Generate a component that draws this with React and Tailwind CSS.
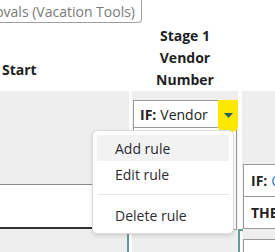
import { useState } from "react";

const font = "font-['Segoe_UI','Open_Sans',sans-serif]";

function MenuItem({ label, active }) {
  return (
    <div
      className={`h-[26px] flex items-center pl-[18px] mx-[4px] text-[14px] text-[#2b2b33] ${
        active ? "bg-[#f2f2f2]" : ""
      }`}
    >
      {label}
    </div>
  );
}

export default function App() {
  const [hover] = useState("add");

  return (
    <div className={`relative w-[275px] h-[252px] overflow-hidden bg-white ${font}`}>
      {/* workflow title box, cut at top */}
      <div className="h-[23px]">
        <div className="w-[142px] h-[23px] flex justify-end items-center overflow-hidden whitespace-nowrap border border-t-0 border-l-0 border-[#a0a0a0] rounded-br-[4px] pr-[6px] text-[14px] text-[#7a7a7a]">
          Approvals (Vacation Tools)
        </div>
      </div>

      {/* column headers */}
      <div className="flex h-[68px]">
        <div className="w-[129px] shrink-0 pt-[36px] pl-[2px] text-[14px] font-bold text-[#1f1f1f] leading-[22px]">
          Start
        </div>
        <div className="w-[106px] shrink-0 ml-[3px] pt-[2px] text-center text-[14px] font-bold text-[#1f1f1f] leading-[22px]">
          Stage 1
          <br />
          Vendor
          <br />
          Number
        </div>
      </div>

      {/* body */}
      <div className="relative flex h-[161px]">
        <div className="w-[129px] shrink-0 bg-[#eeeeee] pt-[93px]">
          <div className="h-[45px] bg-white border-t border-[#8a8a8a] border-b-2 border-b-[#333333]" />
        </div>

        <div className="w-[106px] shrink-0 ml-[3px] bg-[#eeeeee] pt-[9px] pl-[1px]">
          <div className="relative w-[104px] h-[130px] bg-white border border-[#9a9a9a]">
            <div className="h-[27px] flex items-center pl-[6px] text-[14px] text-[#222] border-b border-[#9a9a9a]">
              <span className="font-bold">IF:</span>
              <span className="ml-[4px]">Vendor</span>
            </div>
            <div className="absolute top-[-1px] right-[-2px] w-[20px] h-[32px] bg-[#ffe800] rounded-b-[6px] flex justify-center pt-[13px]">
              <svg width="9" height="5" viewBox="0 0 9 5">
                <path d="M0 0 L9 0 L4.5 5 Z" fill="#2f5f5b" />
              </svg>
            </div>
          </div>
        </div>

        <div className="flex-1 min-w-0 overflow-hidden ml-[4px] bg-[#eeeeee] pl-[1px] pt-[73px]">
          <div className="w-[60px] bg-white border border-[#9a9a9a] text-[14px] text-[#222]">
            <div className="h-[32px] flex items-center pl-[7px] border-b border-[#9a9a9a] whitespace-nowrap overflow-hidden">
              <span className="font-bold">IF:</span>
              <span className="ml-[4px] text-[#2a78d6]">Country</span>
            </div>
            <div className="h-[31px] flex items-center pl-[7px] font-bold whitespace-nowrap overflow-hidden">THEN</div>
          </div>
          <div className="w-[60px] mt-[10px] h-[40px] bg-white border border-[#9a9a9a] pl-[7px] pt-[6px] text-[14px] font-bold text-[#222]">
            IF:
          </div>
        </div>

        {/* connectors */}
        <div className="absolute left-[127px] top-[142px] w-[2px] h-[30px] bg-[#5f9d97]" />
        <div className="absolute left-[238px] top-[138px] w-[2px] h-[30px] bg-[#5f9d97]" />
        <div className="absolute left-[238px] top-[138px] w-[5px] h-[2px] bg-[#5f9d97]" />
      </div>

      {/* context menu */}
      <div className="absolute left-[92px] top-[130px] w-[142px] h-[104px] bg-white border border-[#dcdcdc] rounded-[5px] shadow-[0_2px_4px_rgba(0,0,0,0.12)] pt-[4px]">
        <MenuItem label="Add rule" active={hover === "add"} />
        <MenuItem label="Edit rule" />
        <div className="mx-[4px] my-[7px] h-px bg-[#e6e6e6]" />
        <MenuItem label="Delete rule" />
      </div>
    </div>
  );
}
